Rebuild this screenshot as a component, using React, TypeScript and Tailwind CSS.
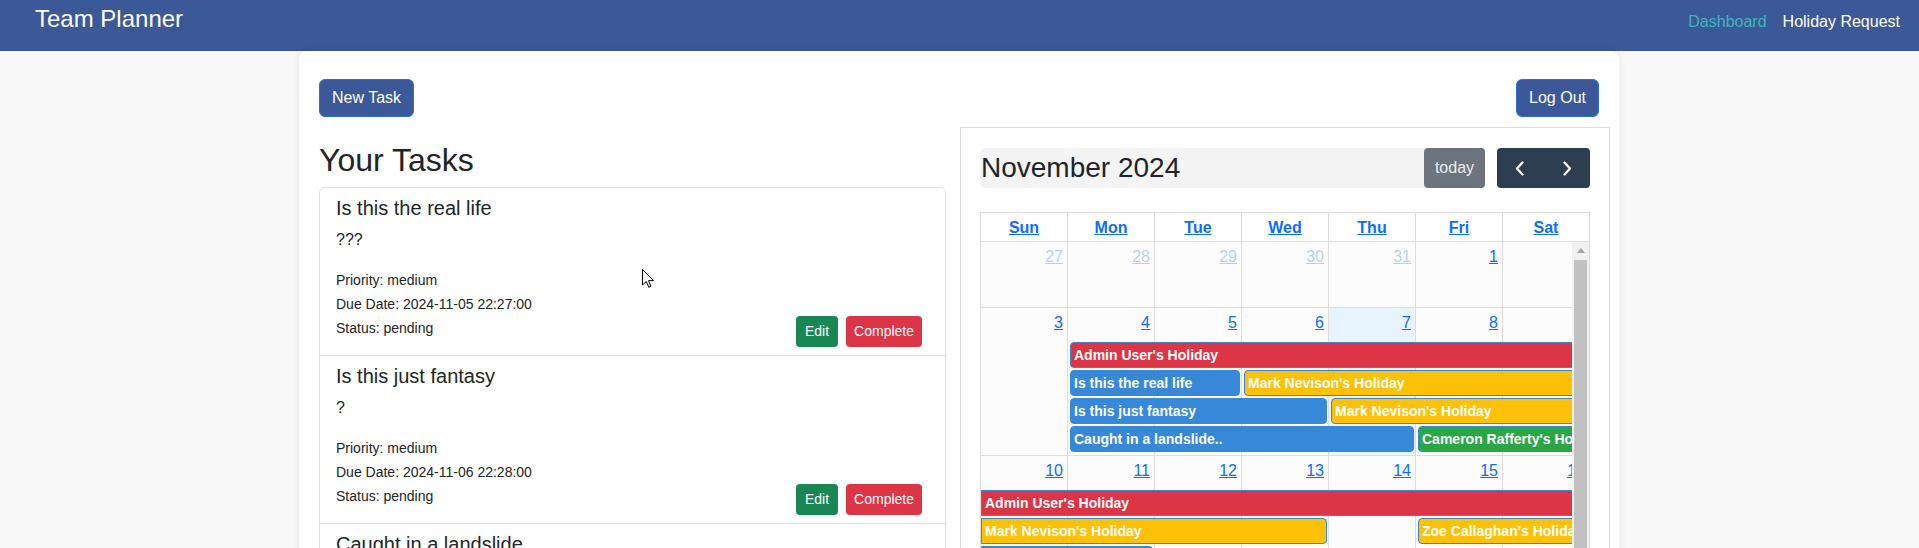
import React from "react";

type Ev = {
  title: string;
  start: number; // 1-based column
  end: number; // exclusive column, 2..8
  color: string;
  contL?: boolean;
  contR?: boolean;
};

const colStart: Record<number, string> = {
  1: "col-start-1",
  2: "col-start-2",
  3: "col-start-3",
  4: "col-start-4",
  5: "col-start-5",
  6: "col-start-6",
  7: "col-start-7",
};
const colEnd: Record<number, string> = {
  2: "col-end-2",
  3: "col-end-3",
  4: "col-end-4",
  5: "col-end-5",
  6: "col-end-6",
  7: "col-end-7",
  8: "col-end-8",
};
const bgColor: Record<string, string> = {
  red: "bg-[#dc3545]",
  blue: "bg-[#3788d8]",
  yellow: "bg-[#ffc107]",
  green: "bg-[#28a745]",
};

type Week = {
  days: { n: number; faded?: boolean; today?: boolean }[];
  rows: Ev[][];
  minH: string;
};

const weeks: Week[] = [
  {
    days: [
      { n: 27, faded: true },
      { n: 28, faded: true },
      { n: 29, faded: true },
      { n: 30, faded: true },
      { n: 31, faded: true },
      { n: 1 },
      { n: 2 },
    ],
    rows: [],
    minH: "min-h-[65px]",
  },
  {
    days: [
      { n: 3 },
      { n: 4 },
      { n: 5 },
      { n: 6 },
      { n: 7, today: true },
      { n: 8 },
      { n: 9 },
    ],
    rows: [
      [{ title: "Admin User's Holiday", start: 2, end: 8, color: "red", contR: true }],
      [
        { title: "Is this the real life", start: 2, end: 4, color: "blue" },
        { title: "Mark Nevison's Holiday", start: 4, end: 8, color: "yellow", contR: true },
      ],
      [
        { title: "Is this just fantasy", start: 2, end: 5, color: "blue" },
        { title: "Mark Nevison's Holiday", start: 5, end: 8, color: "yellow", contR: true },
      ],
      [
        { title: "Caught in a landslide..", start: 2, end: 6, color: "blue" },
        { title: "Cameron Rafferty's Holiday", start: 6, end: 8, color: "green", contR: true },
      ],
    ],
    minH: "min-h-[147px]",
  },
  {
    days: [
      { n: 10 },
      { n: 11 },
      { n: 12 },
      { n: 13 },
      { n: 14 },
      { n: 15 },
      { n: 16 },
    ],
    rows: [
      [{ title: "Admin User's Holiday", start: 1, end: 8, color: "red", contL: true, contR: true }],
      [
        { title: "Mark Nevison's Holiday", start: 1, end: 5, color: "yellow", contL: true },
        { title: "Zoe Callaghan's Holiday", start: 6, end: 8, color: "yellow", contR: true },
      ],
      [{ title: "Cameron Rafferty's Holiday", start: 1, end: 3, color: "green", contL: true }],
    ],
    minH: "min-h-[147px]",
  },
];

const tasks = [
  {
    title: "Is this the real life",
    desc: "???",
    due: "2024-11-05 22:27:00",
  },
  {
    title: "Is this just fantasy",
    desc: "?",
    due: "2024-11-06 22:28:00",
  },
  {
    title: "Caught in a landslide",
    desc: "No escape from reality",
    due: "2024-11-07 22:29:00",
  },
];

function EventBar({ ev }: { ev: Ev }) {
  const cls = [
    colStart[ev.start],
    colEnd[ev.end],
    bgColor[ev.color],
    "h-[26px] border border-[#3788d8] text-white font-bold text-[14px] leading-[24px] pl-[3px] whitespace-nowrap overflow-hidden",
    ev.contL ? "ml-0 rounded-l-none" : "ml-[2px] rounded-l-[4px]",
    ev.contR ? "mr-0 rounded-r-none" : "mr-[2px] rounded-r-[4px]",
  ].join(" ");
  return <div className={cls}>{ev.title}</div>;
}

function WeekRow({ w }: { w: Week }) {
  return (
    <div className="relative border-b border-[#ddd]">
      <div className="absolute inset-0 grid grid-cols-[repeat(7,87px)]">
        {w.days.map((d, i) => (
          <div
            key={i}
            className={
              "border-r border-[#ddd] " + (d.today ? "bg-[#e8f4fd]" : "bg-[#fcfcfc]")
            }
          />
        ))}
      </div>
      <div className={"relative " + w.minH}>
        <div className="grid grid-cols-[repeat(7,87px)] h-[34px]">
          {w.days.map((d, i) => (
            <div key={i} className="text-right pr-[5px] pt-[3px]">
              <a
                className={
                  "text-[16px] leading-6 underline text-[#0d6efd] " +
                  (d.faded ? "opacity-30" : "")
                }
              >
                {d.n}
              </a>
            </div>
          ))}
        </div>
        {w.rows.map((row, ri) => (
          <div key={ri} className="grid grid-cols-[repeat(7,87px)] h-[28px]">
            {row.map((ev, ei) => (
              <EventBar key={ei} ev={ev} />
            ))}
          </div>
        ))}
      </div>
    </div>
  );
}

function Chevron({ dir }: { dir: "l" | "r" }) {
  return (
    <svg width="10" height="15" viewBox="0 0 10 15" fill="none">
      <path
        d={dir === "l" ? "M7.5 1.5 L2 7.5 L7.5 13.5" : "M2.5 1.5 L8 7.5 L2.5 13.5"}
        stroke="white"
        strokeWidth="2.3"
        strokeLinecap="round"
        strokeLinejoin="round"
      />
    </svg>
  );
}

export default function App() {
  return (
    <div className="relative h-[548px] overflow-hidden bg-[#f8f8f8] font-['Liberation_Sans',Arial,sans-serif] text-[#212529]">
      <nav className="h-[51px] bg-[#3b5998] flex items-start justify-between pl-[35px] pr-[19px]">
        <span className="text-[24px] leading-[36px] pt-px text-white">Team Planner</span>
        <div className="flex gap-4 pt-[10px] text-[16px] leading-6">
          <a className="text-[#40b5ba]">Dashboard</a>
          <a className="text-white">Holiday Request</a>
        </div>
      </nav>

      <div className="pr-px">
        <div className="mx-auto w-[1320px] bg-white rounded-lg shadow-[0_0_8px_rgba(0,0,0,0.08)] px-5 pt-[28px] pb-10">
          <div className="flex justify-between">
            <button className="h-[38px] px-3 rounded-md bg-[#3b5998] border border-[#2d6fe0] text-white text-[16px] leading-6">
              New Task
            </button>
            <button className="h-[38px] px-3 rounded-md bg-[#3b5998] border border-[#2d6fe0] text-white text-[16px] leading-6">
              Log Out
            </button>
          </div>

          <div className="flex mt-[10px] mr-[-11px]">
            <div className="w-[627px] shrink-0 pt-[14px]">
              <h2 className="text-[32px] leading-[38px] mb-2">Your Tasks</h2>
              <div className="border border-[#dee2e6] rounded-md bg-white">
                {tasks.map((t, i) => (
                  <div key={i} className="px-4 py-2 border-b border-[#dee2e6]">
                    <h5 className="text-[20px] leading-[24px] mb-2">{t.title}</h5>
                    <p className="text-[16px] leading-6 mb-4">{t.desc}</p>
                    <div className="flex justify-between items-end">
                      <div className="text-[14px] leading-6 pb-[7px]">
                        <div>Priority: medium</div>
                        <div>Due Date: {t.due}</div>
                        <div>Status: pending</div>
                      </div>
                      <div className="flex gap-2 pr-[7px]">
                        <button className="h-[31px] px-[9px] rounded bg-[#198754] text-white text-[14px] leading-[21px]">
                          Edit
                        </button>
                        <button className="h-[31px] px-[8px] rounded bg-[#dc3545] text-white text-[14px] leading-[21px]">
                          Complete
                        </button>
                      </div>
                    </div>
                  </div>
                ))}
              </div>
            </div>

            <div className="ml-auto w-[650px] shrink-0 border border-[#ddd] px-[19px] pt-5 bg-white">
              <div className="flex h-10">
                <div className="flex-1 bg-[#f4f4f4] rounded-l-[5px] text-[28px] leading-10 pl-px">
                  November 2024
                </div>
                <button className="w-[61px] bg-[#6c757d] rounded text-[#e9ecef] text-[16px]">
                  today
                </button>
                <div className="ml-3 w-[93px] bg-[#2c3e50] rounded flex">
                  <button className="flex-1 flex items-center justify-center">
                    <Chevron dir="l" />
                  </button>
                  <button className="flex-1 flex items-center justify-center">
                    <Chevron dir="r" />
                  </button>
                </div>
              </div>

              <div className="mt-6 w-[610px] border-l border-t border-[#ddd]">
                <div className="grid grid-cols-[repeat(7,87px)] bg-white">
                  {["Sun", "Mon", "Tue", "Wed", "Thu", "Fri", "Sat"].map((d) => (
                    <div
                      key={d}
                      className="h-[29px] border-r border-b border-[#ddd] text-center pt-[3px]"
                    >
                      <a className="text-[16px] leading-[22px] font-bold underline text-[#0d6efd]">
                        {d}
                      </a>
                    </div>
                  ))}
                </div>
                <div className="flex">
                  <div className="w-[591px] overflow-hidden">
                    <div className="w-[609px]">
                      {weeks.map((w, i) => (
                        <WeekRow key={i} w={w} />
                      ))}
                    </div>
                  </div>
                  <div className="w-[18px] border-r border-[#ddd] bg-[#f1f1f1] flex flex-col">
                    <div className="h-[17px] flex items-center justify-center">
                      <svg width="8" height="5" viewBox="0 0 8 5">
                        <path d="M4 0 L8 5 L0 5 Z" fill="#a3a3a3" />
                      </svg>
                    </div>
                    <div className="flex-1 mx-[2px] mt-px bg-[#c1c1c1]" />
                  </div>
                </div>
              </div>
            </div>
          </div>
        </div>
      </div>

      <svg
        className="absolute left-[642px] top-[269px]"
        width="13"
        height="20"
        viewBox="0 0 13 20"
      >
        <path
          d="M0.5 0.5 L0.5 16 L4.3 12.4 L6.8 18.3 L9 17.3 L6.5 11.6 L11.5 11.6 Z"
          fill="white"
          stroke="black"
          strokeWidth="1"
          strokeLinejoin="round"
        />
      </svg>
    </div>
  );
}
